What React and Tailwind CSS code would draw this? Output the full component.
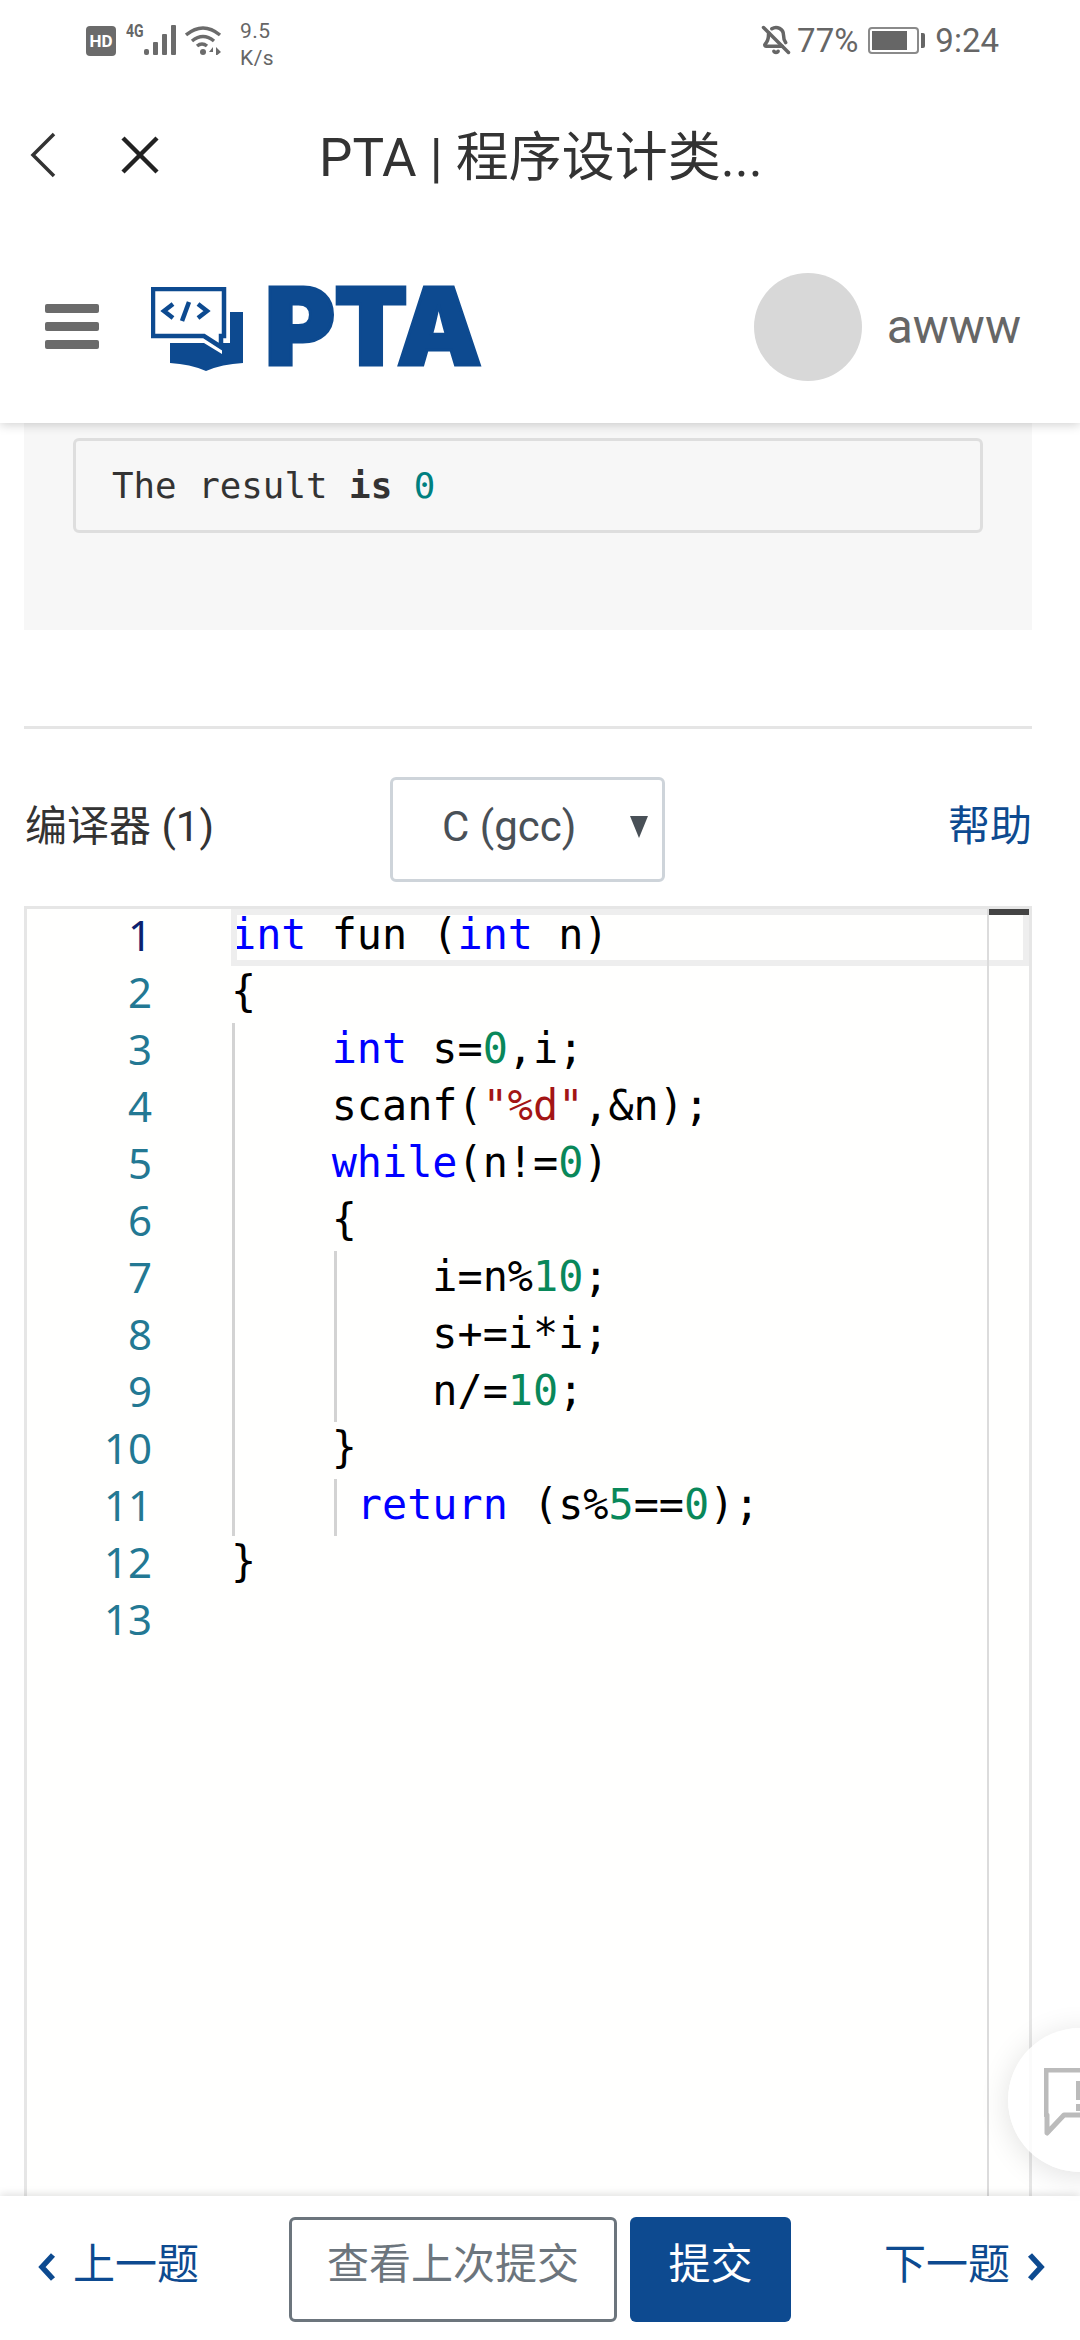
import { BellOff } from 'lucide-react'

const BLUE = '#0d4a90'

// one entry per editor line; guides are the indent rails drawn at 1 and 103px
const LINES = [
  { g: [], t: [['k', 'int'], ['', ' fun ('], ['k', 'int'], ['', ' n)']] },
  { g: [], t: [['', '{']] },
  { g: [1], t: [['', '    '], ['k', 'int'], ['', ' s='], ['n', '0'], ['', ',i;']] },
  { g: [1], t: [['', '    scanf('], ['s', '"%d"'], ['', ',&n);']] },
  { g: [1], t: [['', '    '], ['k', 'while'], ['', '(n!='], ['n', '0'], ['', ')']] },
  { g: [1], t: [['', '    {']] },
  { g: [1, 103], t: [['', '        i=n%'], ['n', '10'], ['', ';']] },
  { g: [1, 103], t: [['', '        s+=i*i;']] },
  { g: [1, 103], t: [['', '        n/='], ['n', '10'], ['', ';']] },
  { g: [1], t: [['', '    }']] },
  { g: [1, 103], t: [['', '     '], ['k', 'return'], ['', ' (s%'], ['n', '5'], ['', '=='], ['n', '0'], ['', ');']] },
  { g: [], t: [['', '}']] },
  { g: [], t: [] },
]

const tokenClass = { k: 'text-[#0000ff]', n: 'text-[#09885a]', s: 'text-[#a31515]', '': 'text-black' }

function Logo() {
  return (
    <div className="flex items-center">
      <svg viewBox="151 287 92 85" className="mt-[6px] w-[92px] h-[85px]">
        <path fill={BLUE} d="M170 343H204L222 354V343H230V312H243V363Q222 364 206 371Q190 364 170 363Z" />
        <path fill="#fff" stroke={BLUE} strokeWidth="4.5" d="M153 289H224V336H221V347L204 336H153Z" />
        <g fill="none" stroke={BLUE} strokeWidth="4.5">
          <polyline points="173,304 164,311 173,318" />
          <line x1="189" y1="302" x2="182" y2="321" />
          <polyline points="198,304 207,311 198,318" />
        </g>
      </svg>
      <span className="ml-[22px] font-['Inter',sans-serif] font-black text-[107px] leading-[85px] tracking-[-1px] text-[#0d4a90] [-webkit-text-stroke:3px_#0d4a90]">PTA</span>
    </div>
  )
}

function StatusBar() {
  return (
    <div className="h-[80px] flex justify-between text-[#666666]">
      <div className="flex items-start pl-[86px] pt-[18px]">
        <div className="mt-[8px] w-[30px] h-[30px] rounded-[4px] bg-[#6b6b6b] text-white text-[17px] leading-[30px] font-bold text-center">HD</div>
        <div className="ml-[10px] mt-[5px] w-[18px] text-[18px] leading-[16px] font-bold origin-left scale-x-[0.78] whitespace-nowrap">4G</div>
        <svg viewBox="0 0 33 30" className="mt-[7px] w-[33px] h-[30px]" fill="#6b6b6b">
          <rect x="0" y="24" width="5" height="6" rx="2" />
          <rect x="9" y="17" width="5" height="13" rx="1" />
          <rect x="18" y="9" width="5" height="21" rx="1" />
          <rect x="27" y="0" width="5" height="30" rx="1" />
        </svg>
        <svg viewBox="0 0 37 30" className="ml-[8px] mt-[7px] w-[37px] h-[30px]" fill="none" stroke="#6b6b6b" strokeWidth="3.5">
          <path d="M1 10Q18 -4 35 10" />
          <path d="M7 16Q18 7 29 16" />
          <path d="M12 21Q17 17 22 21" />
          <circle cx="18" cy="27" r="3" fill="#6b6b6b" stroke="none" />
          <path d="M28 22L24 27H28ZM31 22V31L36 27Z" fill="#6b6b6b" stroke="none" />
        </svg>
        <div className="ml-[18px] text-[21px] leading-[27px] tracking-[0.5px]">
          <div>9.5</div>
          <div>K/s</div>
        </div>
      </div>
      <div className="flex items-start pt-[23px] pr-[81px]">
        <BellOff size={30} strokeWidth={2.8} className="mt-[2px]" />
        <span className="ml-[6px] text-[33px] leading-[36px]">77%</span>
        <div className="ml-[10px] mt-[4px] flex items-center">
          <div className="w-[51px] h-[27px] border-2 border-[#8a8a8a] rounded-[4px] p-[2px]">
            <div className="w-[35px] h-full bg-[#666666]"></div>
          </div>
          <div className="ml-[2px] w-[4px] h-[15px] bg-[#666666] rounded-r-[2px]"></div>
        </div>
        <span className="ml-[10px] text-[33px] leading-[36px]">9:24</span>
      </div>
    </div>
  )
}

function TitleBar() {
  return (
    <div className="relative z-20 h-[150px] flex items-center bg-white text-[#333333]">
      <svg viewBox="0 0 26 46" className="ml-[30px] w-[26px] h-[46px]" fill="none" stroke="#333333" strokeWidth="3.5">
        <polyline points="24,2 3,23 24,44" />
      </svg>
      <svg viewBox="0 0 38 38" className="ml-[65px] w-[38px] h-[38px]" fill="none" stroke="#222222" strokeWidth="4.5">
        <line x1="2" y1="2" x2="36" y2="36" />
        <line x1="36" y1="2" x2="2" y2="36" />
      </svg>
      <span className="ml-[160px] pt-[5px] text-[53px] leading-[60px] whitespace-nowrap">PTA | 程序设计类...</span>
    </div>
  )
}

function Header() {
  return (
    <div className="relative z-10 h-[193px] flex items-center bg-white shadow-[0_2px_10px_rgba(0,0,0,0.18)]">
      <div className="ml-[45px] w-[54px] flex flex-col gap-[9px]">
        <div className="h-[9px] rounded-[2px] bg-[#6b6b6b]"></div>
        <div className="h-[9px] rounded-[2px] bg-[#6b6b6b]"></div>
        <div className="h-[9px] rounded-[2px] bg-[#6b6b6b]"></div>
      </div>
      <div className="ml-[52px]"><Logo /></div>
      <div className="ml-auto w-[108px] h-[108px] rounded-full bg-[#d8d8d8]"></div>
      <span className="ml-[25px] mr-[59px] text-[48px] leading-[56px] text-[#666666]">awww</span>
    </div>
  )
}

function Editor() {
  return (
    <div className="relative mt-[24px] flex-1 min-h-0 flex border-[3px] border-b-0 border-[#e6e6e6] bg-[#fffffe] overflow-hidden">
      <div className="w-[204px] pr-[79px] text-right font-['Noto_Sans',sans-serif] text-[42px] leading-[52px] text-[#237893]">
        {LINES.map((_, i) => (
          <div key={i} className={i === 0 ? 'h-[57px] text-[#0b216f]' : 'h-[57px]'}>{i + 1}</div>
        ))}
      </div>
      <div className="relative flex-1 font-['DejaVu_Sans_Mono',monospace] text-[41.8px] leading-[51px]">
        {LINES.map((line, i) => (
          <div key={i} className="relative h-[57px] whitespace-pre">
            {line.g.map((x) => (
              <span key={x} className="absolute top-0 bottom-0 w-[3px] bg-[#d3d3d3]" style={{ left: x }}></span>
            ))}
            {line.t.map(([c, s], j) => (
              <span key={j} className={tokenClass[c]}>{s}</span>
            ))}
          </div>
        ))}
        <div className="absolute top-0 left-0 right-0 h-[57px] border-[6px] border-[#eeeeee]"></div>
        <div className="absolute top-0 bottom-0 right-0 w-[42px] border-l-2 border-[#dcdcdc]">
          <div className="h-[6px] bg-[#444444]"></div>
        </div>
      </div>
    </div>
  )
}

function Footer() {
  return (
    <div className="relative z-10 h-[144px] bg-white flex items-start pt-[21px] shadow-[0_-2px_8px_rgba(0,0,0,0.12)]">
      <div className="ml-[37px] h-[105px] flex items-center pb-[9px] text-[42px] leading-[50px] text-[#0d4a90]">
        <svg viewBox="0 0 20 30" className="w-[20px] h-[30px] mt-[4px]" fill="none" stroke={BLUE} strokeWidth="5.5">
          <polyline points="16,3 5,15 16,27" />
        </svg>
        <span className="ml-[16px]">上一题</span>
      </div>
      <div className="ml-[90px] w-[328px] h-[105px] box-border border-[3px] border-[#6c757d] rounded-[6px] pt-[20px] text-center text-[42px] leading-[50px] text-[#6c757d]">查看上次提交</div>
      <div className="ml-[13px] w-[161px] h-[105px] rounded-[6px] bg-[#0d4a90] pt-[23px] text-center text-[42px] leading-[50px] text-white">提交</div>
      <div className="ml-[93px] h-[105px] flex items-center pb-[9px] text-[42px] leading-[50px] text-[#0d4a90]">
        <span>下一题</span>
        <svg viewBox="0 0 20 30" className="ml-[16px] w-[20px] h-[30px] mt-[4px]" fill="none" stroke={BLUE} strokeWidth="5.5">
          <polyline points="4,3 15,15 4,27" />
        </svg>
      </div>
    </div>
  )
}

export default function App() {
  return (
    <div className="relative w-[1080px] h-[2340px] overflow-hidden flex flex-col bg-white font-['Roboto','Noto_Sans_CJK_SC',sans-serif]">
      <StatusBar />
      <TitleBar />
      <Header />

      <div className="flex-1 min-h-0 flex flex-col pl-[24px] pr-[48px]">
        <div className="h-[207px] bg-[#f7f7f7] pt-[15px] px-[49px]">
          <div className="h-[95px] border-[3px] border-[#dedede] rounded-[6px] pl-[36px] font-['DejaVu_Sans_Mono',monospace] text-[35.8px] leading-[90px] text-[#333333] whitespace-pre">
            The result <b>is</b> <span className="text-[#008080]">0</span>
          </div>
        </div>
        <div className="mt-[96px] h-[3px] bg-[#e5e5e5]"></div>
        <div className="mt-[48px] h-[105px] flex items-center">
          <span className="ml-[1px] w-[365px] pb-[6px] text-[42px] leading-[50px] text-[#333333]">编译器 (1)</span>
          <div className="relative w-[275px] h-[105px] border-[3px] border-[#ced4da] rounded-[6px] pl-[49px] text-[42px] leading-[93px] text-[#495057]">
            C (gcc)
            <svg viewBox="0 0 18 22" className="absolute right-[14px] top-[36px] w-[18px] h-[22px]" fill="#495057">
              <polygon points="0,0 18,0 9,22" />
            </svg>
          </div>
          <span className="ml-auto pb-[6px] text-[42px] leading-[50px] text-[#0d4a90]">帮助</span>
        </div>
        <Editor />
      </div>

      <Footer />

      <div className="absolute z-20 left-[1008px] top-[2028px] w-[144px] h-[144px] rounded-full bg-white/85 shadow-[0_4px_30px_rgba(0,0,0,0.12)]">
        <svg viewBox="0 0 60 70" className="ml-[36px] mt-[40px] w-[60px] h-[70px]" fill="none" stroke="#bbbbbb" strokeWidth="5">
          <path d="M2 2H60V47H20L3 65V47H2Z" strokeLinejoin="round" />
          <rect x="32" y="13" width="7" height="19" fill="#bbbbbb" stroke="none" />
          <rect x="32" y="36" width="7" height="7" fill="#bbbbbb" stroke="none" />
        </svg>
      </div>
    </div>
  )
}
